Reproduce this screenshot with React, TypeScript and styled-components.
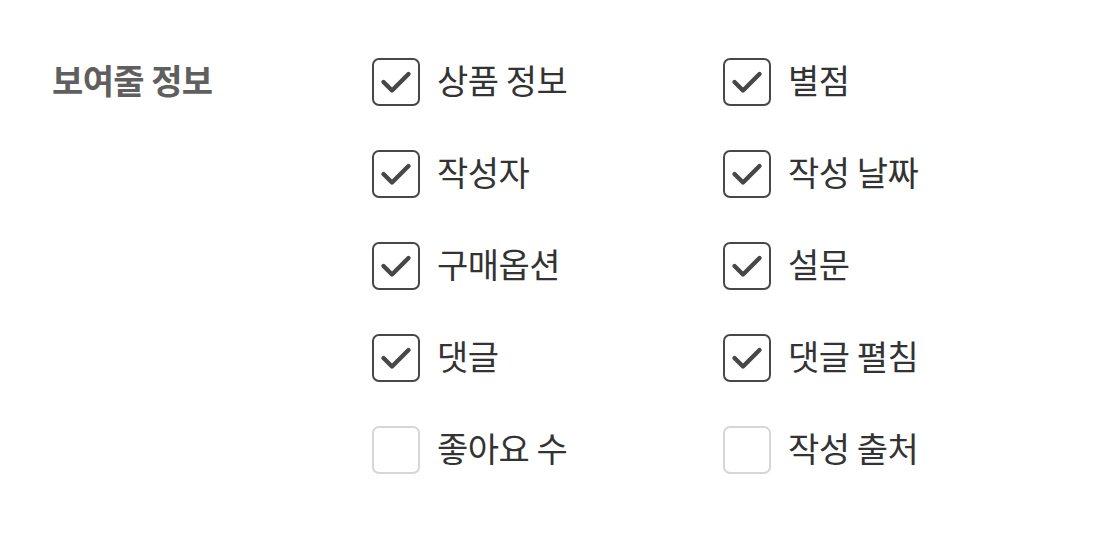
import styled, { createGlobalStyle } from "styled-components";

const GlobalStyle = createGlobalStyle`
  body {
    margin: 0;
    background: #ffffff;
    font-family: "Noto Sans CJK KR", "Noto Sans", sans-serif;
  }
`;

const Section = styled.section`
  display: flex;
  padding: 58px 0 0 52px;
`;

const Title = styled.h2`
  margin: 0;
  width: 320px;
  flex-shrink: 0;
  font-size: 34px;
  font-weight: 700;
  color: #5f5f5f;
  line-height: 44px;
  letter-spacing: -0.6px;
`;

const OptionGrid = styled.div`
  display: grid;
  grid-template-columns: 351px 351px;
  row-gap: 44px;
`;

const Option = styled.label`
  display: flex;
  align-items: center;
  gap: 17px;
  height: 48px;
  cursor: pointer;
`;

const Box = styled.span<{ $checked: boolean }>`
  display: flex;
  align-items: center;
  justify-content: center;
  box-sizing: border-box;
  width: 48px;
  height: 48px;
  border-radius: 7px;
  border: 2.5px solid ${(p) => (p.$checked ? "#474747" : "#d6d6d8")};
  background: #ffffff;
`;

const Label = styled.span`
  font-size: 34px;
  line-height: 44px;
  padding-bottom: 4px;
  color: #333333;
  letter-spacing: -0.5px;
`;

const options: { label: string; checked: boolean }[] = [
  { label: "상품 정보", checked: true },
  { label: "별점", checked: true },
  { label: "작성자", checked: true },
  { label: "작성 날짜", checked: true },
  { label: "구매옵션", checked: true },
  { label: "설문", checked: true },
  { label: "댓글", checked: true },
  { label: "댓글 펼침", checked: true },
  { label: "좋아요 수", checked: false },
  { label: "작성 출처", checked: false },
];

function CheckMark() {
  return (
    <svg width="32" height="26" viewBox="0 0 32 26" fill="none">
      <path
        d="M3.5 13 L12 21.5 L28.5 5"
        stroke="#474747"
        strokeWidth="4.4"
        strokeLinecap="round"
        strokeLinejoin="round"
      />
    </svg>
  );
}

export default function App() {
  return (
    <>
      <GlobalStyle />
      <Section>
        <Title>보여줄 정보</Title>
        <OptionGrid>
          {options.map((o) => (
            <Option key={o.label}>
              <Box $checked={o.checked}>{o.checked && <CheckMark />}</Box>
              <Label>{o.label}</Label>
            </Option>
          ))}
        </OptionGrid>
      </Section>
    </>
  );
}
